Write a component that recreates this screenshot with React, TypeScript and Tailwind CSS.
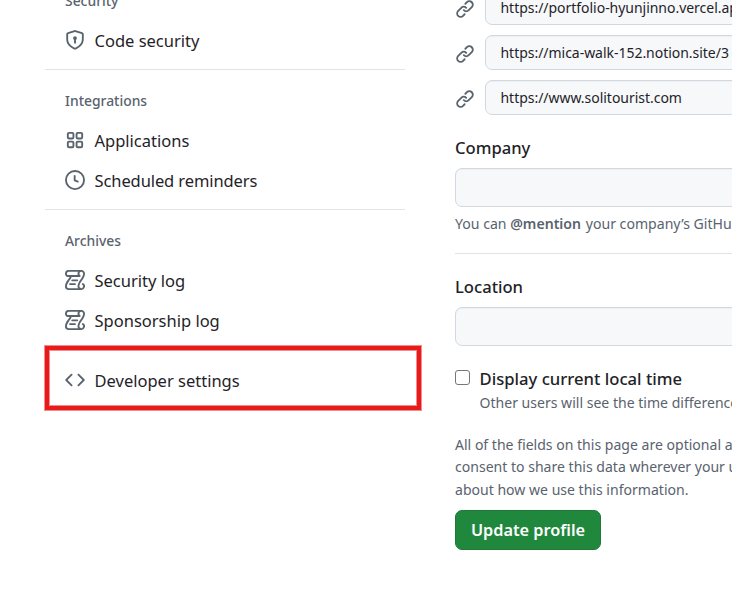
import type { ReactNode } from 'react';

function Octicon({ children, className = '' }: { children: ReactNode; className?: string }) {
  return (
    <svg viewBox="0 0 16 16" width="20" height="20" fill="currentColor" className={`shrink-0 text-[#59636e] ${className}`} aria-hidden="true">
      {children}
    </svg>
  );
}

const shieldLock = (
  <path d="m8.533.133 5.25 1.68A1.75 1.75 0 0 1 15 3.48V7c0 1.566-.32 3.182-1.303 4.682-.983 1.498-2.585 2.813-5.032 3.855a1.697 1.697 0 0 1-1.33 0c-2.447-1.042-4.049-2.357-5.032-3.855C1.32 10.182 1 8.566 1 7V3.48a1.75 1.75 0 0 1 1.217-1.667l5.25-1.68a1.748 1.748 0 0 1 1.066 0Zm-.61 1.429.001.001-5.25 1.68a.251.251 0 0 0-.174.237V7c0 1.36.275 2.666 1.057 3.859.784 1.194 2.121 2.342 4.366 3.298a.196.196 0 0 0 .154 0c2.245-.957 3.582-2.103 4.366-3.297C13.225 9.666 13.5 8.358 13.5 7V3.48a.25.25 0 0 0-.174-.238l-5.25-1.68a.25.25 0 0 0-.153 0ZM9.5 6.5c0 .536-.286 1.032-.75 1.3v2.45a.75.75 0 0 1-1.5 0V7.8A1.5 1.5 0 1 1 9.5 6.5Z" />
);
const apps = (
  <g fill="none" stroke="currentColor" strokeWidth="1.5">
    <rect x="2.25" y="2.25" width="4.5" height="4.5" rx="1" />
    <rect x="9.25" y="2.25" width="4.5" height="4.5" rx="1" />
    <rect x="2.25" y="9.25" width="4.5" height="4.5" rx="1" />
    <rect x="9.25" y="9.25" width="4.5" height="4.5" rx="1" />
  </g>
);
const clock = (
  <path d="M8 0a8 8 0 1 1 0 16A8 8 0 0 1 8 0ZM1.5 8a6.5 6.5 0 1 0 13 0 6.5 6.5 0 0 0-13 0Zm7-3.25v2.992l2.028.812a.75.75 0 0 1-.557 1.392l-2.5-1A.751.751 0 0 1 7 8.25v-3.5a.75.75 0 0 1 1.5 0Z" />
);
const log = (
  <>
    <path d="M5 8.25a.75.75 0 0 1 .75-.75h4a.75.75 0 0 1 0 1.5h-4A.75.75 0 0 1 5 8.25ZM4 10.5A.75.75 0 0 0 4 12h4a.75.75 0 0 0 0-1.5H4Z" />
    <path d="M13-.005c1.654 0 3 1.328 3 3 0 .982-.338 1.933-.783 2.818-.443.879-1.028 1.758-1.582 2.588l-.011.017c-.568.853-1.104 1.659-1.501 2.446-.398.789-.623 1.494-.623 2.136a1.5 1.5 0 1 0 2.333-1.248.75.75 0 0 1 .834-1.246A3 3 0 0 1 13 16H3a3 3 0 0 1-3-3c0-1.582.891-3.135 1.777-4.506.209-.322.418-.637.623-.946.473-.709.923-1.386 1.287-2.048H2.51c-.576 0-1.381-.133-1.907-.783A2.68 2.68 0 0 1 0 2.995a3 3 0 0 1 3-3Zm0 1.5a1.5 1.5 0 0 0-1.5 1.5c0 .476.223.834.667 1.132A.75.75 0 0 1 11.75 5.5H5.368c-.467 1.003-1.141 2.015-1.773 2.963-.192.289-.381.571-.558.845C2.13 10.711 1.5 11.916 1.5 13A1.5 1.5 0 0 0 3 14.5h7.401A2.989 2.989 0 0 1 10 13c0-.979.338-1.928.784-2.812.441-.874 1.023-1.748 1.575-2.576l.017-.026c.568-.853 1.103-1.658 1.501-2.448.398-.79.623-1.497.623-2.143 0-.838-.669-1.5-1.5-1.5Zm-10 0a1.5 1.5 0 0 0-1.5 1.5c0 .321.1.569.27.778.097.12.325.227.74.227h7.674A2.737 2.737 0 0 1 10 2.995c0-.546.146-1.059.401-1.5Z" />
  </>
);
const code = (
  <path d="m11.28 3.22 4.25 4.25a.75.75 0 0 1 0 1.06l-4.25 4.25a.749.749 0 0 1-1.275-.326.749.749 0 0 1 .215-.734L13.94 8l-3.72-3.72a.749.749 0 0 1 .326-1.275.749.749 0 0 1 .734.215Zm-6.56 0a.751.751 0 0 1 1.042.018.751.751 0 0 1 .018 1.042L2.06 8l3.72 3.72a.749.749 0 0 1-.326 1.275.749.749 0 0 1-.734-.215L.47 8.53a.75.75 0 0 1 0-1.06Z" />
);
const link = (
  <path d="m7.775 3.275 1.25-1.25a3.5 3.5 0 1 1 4.95 4.95l-2.5 2.5a3.5 3.5 0 0 1-4.95 0 .751.751 0 0 1 .018-1.042.751.751 0 0 1 1.042-.018 1.998 1.998 0 0 0 2.83 0l2.5-2.5a2.002 2.002 0 0 0-2.83-2.83l-1.25 1.25a.751.751 0 0 1-1.042-.018.751.751 0 0 1-.018-1.042Zm-4.69 9.64a1.998 1.998 0 0 0 2.83 0l1.25-1.25a.751.751 0 0 1 1.042.018.751.751 0 0 1 .018 1.042l-1.25 1.25a3.5 3.5 0 1 1-4.95-4.95l2.5-2.5a3.5 3.5 0 0 1 4.95 0 .751.751 0 0 1-.018 1.042.751.751 0 0 1-1.042.018 1.998 1.998 0 0 0-2.83 0l-2.5 2.5a1.998 1.998 0 0 0 0 2.83Z" />
);

function NavHeading({ children }: { children: ReactNode }) {
  return <h3 className="flex h-10 items-center pt-0.5 pl-5 text-[13.9px] font-medium text-[#59636e]">{children}</h3>;
}

function NavItem({ icon, children, tight = false }: { icon: ReactNode; children: ReactNode; tight?: boolean }) {
  return (
    <a className={`flex h-10 items-center gap-[9.5px] pl-5 text-[16.5px] text-[#1f2328] ${tight ? 'tracking-[-0.1px]' : ''}`}>
      <Octicon>{icon}</Octicon>
      <span className="pt-0.5">{children}</span>
    </a>
  );
}

function NavDivider() {
  return <hr className="mt-[9px] mb-2.5 border-t border-[#d1d9e0b3]" />;
}

function Sidebar() {
  return (
    <nav className="relative w-[360px] shrink-0">
      <div className="-mt-5">
        <NavHeading>Security</NavHeading>
        <NavItem icon={shieldLock}>Code security</NavItem>
      </div>
      <NavDivider />
      <NavHeading>Integrations</NavHeading>
      <NavItem icon={apps}>Applications</NavItem>
      <NavItem icon={clock} tight>Scheduled reminders</NavItem>
      <NavDivider />
      <NavHeading>Archives</NavHeading>
      <NavItem icon={log}>Security log</NavItem>
      <NavItem icon={log}>Sponsorship log</NavItem>
      <div className="mt-5">
        <NavItem icon={code}>Developer settings</NavItem>
      </div>
      {/* red highlight frame around the last entry */}
      <div className="absolute top-[346px] left-0 h-16 w-[376px] border-4 border-[#e81b1b] shadow-[0_0_0_1px_#f28d8d,inset_0_0_0_1px_#f28d8d]" />
    </nav>
  );
}

function LinkRow({ url }: { url: string }) {
  return (
    <div className="flex items-center gap-2.5">
      <Octicon className="mt-[3px]">{link}</Octicon>
      <div className="flex h-[35px] flex-1 items-center rounded-[7px] border border-[#d1d9e0] bg-[#f6f8fa] pl-[14.5px] text-[14px] tracking-[-0.03px] whitespace-nowrap text-[#1f2328] shadow-[inset_0_1px_0_#1f23280a]">
        {url}
      </div>
    </div>
  );
}

function TextField({ label }: { label: string }) {
  return (
    <div>
      <div className="h-[26px] text-[16.6px] leading-[26px] font-medium text-[#1f2328]">{label}</div>
      <div className="mt-[7px] h-[39px] rounded-[7px] border border-[#d1d9e0] bg-[#f6f8fa] shadow-[inset_0_1px_0_#1f23280a]" />
    </div>
  );
}

export default function App() {
  return (
    <div className="flex h-[593px] w-[732px] overflow-hidden bg-white pl-[45px] font-['Noto_Sans','Open_Sans',sans-serif]">
      <Sidebar />
      <main className="ml-[50px] w-[560px] shrink-0">
        <div className="-mt-2.5 flex flex-col gap-2.5">
          <LinkRow url="https://portfolio-hyunjinno.vercel.app/" />
          <LinkRow url="https://mica-walk-152.notion.site/3" />
          <LinkRow url="https://www.solitourist.com" />
        </div>
        <div className="mt-5">
          <TextField label="Company" />
          <p className="mt-1.5 h-[22px] text-[14.1px] leading-[22px] whitespace-nowrap text-[#59636e]">
            You can <span className="font-semibold">@mention</span><span className="ml-px"> your company’s GitHub organization to link it.</span>
          </p>
        </div>
        <hr className="mt-[18px] border-t border-[#d1d9e0b3]" />
        <div className="mt-5">
          <TextField label="Location" />
        </div>
        <div className="mt-5 flex gap-[9.5px]">
          <div className="mt-1 size-[15px] shrink-0 rounded-[3px] border border-[#767676] bg-white" />
          <div>
            <div className="h-[26px] text-[16.65px] leading-[26px] font-medium text-[#1f2328]">Display current local time</div>
            <p className="h-[22px] text-[14.05px] leading-[22px] whitespace-nowrap text-[#59636e]">
              Other users will see the time difference from their local time.
            </p>
          </div>
        </div>
        <p className="mt-[19.5px] text-[14.05px] leading-[22.5px] whitespace-nowrap text-[#59636e]">
          All of the fields on this page are optional and can be deleted
          <br />
          consent to share this data wherever your user profile
          <br />
          about how we use this information.
        </p>
        <button className="mt-[8.5px] flex h-10 w-[146px] items-center justify-center rounded-[7px] border border-[#1f7a39] bg-[#1f883d] pt-0.5 text-[16.3px] font-semibold text-white">
          Update profile
        </button>
      </main>
    </div>
  );
}
